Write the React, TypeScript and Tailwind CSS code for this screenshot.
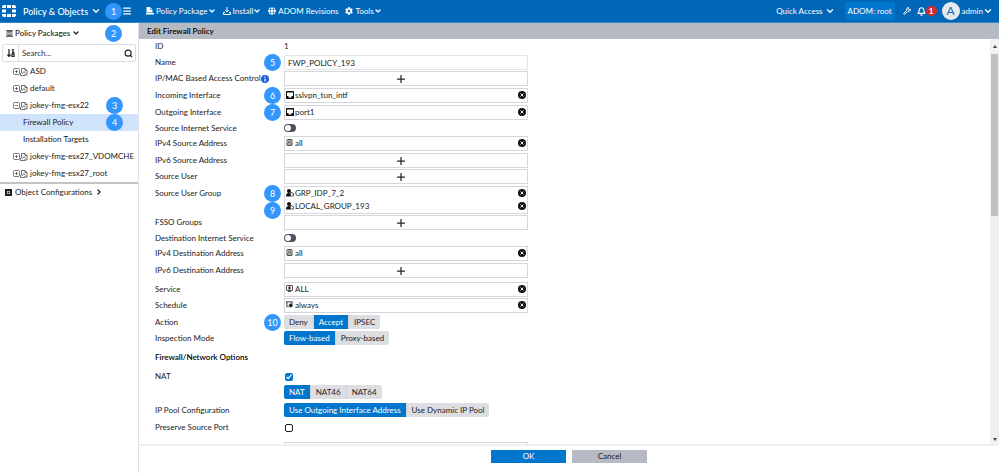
import React, { useState } from 'react';
import { Bell, ChevronDown, ChevronRight, Menu, Plus, Search, Wrench } from 'lucide-react';
import { FaCog, FaGlobe } from 'react-icons/fa';

const FortinetLogo = () => (
  <svg viewBox="0 0 28 24" className="w-3.5 h-3 shrink-0" fill="#fff">
    <path d="M0 6V4a4 4 0 0 1 4-4h4v6zM10 0h8v6h-8zM20 0h4a4 4 0 0 1 4 4v2h-8zM0 9h8v6H0zM20 9h8v6h-8zM0 18h8v6H4a4 4 0 0 1-4-4zM10 18h8v6h-8zM20 18h8v2a4 4 0 0 1-4 4h-4z" />
  </svg>
);

const PackageIcon = () => (
  <svg viewBox="0 0 16 16" className="w-2 h-2" fill="currentColor">
    <path d="M1 0h7v6h5v5H1zM9 0l4 5H9zM0 12h16v3H0z" />
  </svg>
);

const InstallIcon = () => (
  <svg viewBox="0 0 16 16" className="w-2 h-2" fill="none" stroke="currentColor" strokeWidth="2">
    <path d="M8 0v10M4 6l4 4 4-4M4 11H1v4h14v-4h-3" />
  </svg>
);

const ListIcon = () => (
  <svg viewBox="0 0 14 14" className="w-[7px] h-[7px]" fill="none" stroke="#333" strokeWidth="1.500">
    <path d="M0 1h14M0 13h14M2 3v8h10V3zM4 5.500h6M4 8.500h6" />
  </svg>
);

const SortIcon = () => (
  <svg viewBox="0 0 16 16" className="w-2 h-2" fill="none" stroke="#222" strokeWidth="2.500">
    <path d="M4 0v14M1 11l3 4 3-4M10 2l2-1v6M10 7h5M10 10h4v5h-4z" />
  </svg>
);

const ObjectIcon = () => (
  <svg viewBox="0 0 14 14" className="w-[7px] h-[7px]">
    <rect width="14" height="14" fill="#222" />
    <path d="M4 4h6v6H4z" fill="#fff" />
    <path d="M5 5h4v4H5z" fill="#222" />
  </svg>
);

const ExpandIcon = ({ open }: { open?: boolean }) => (
  <svg viewBox="0 0 14 14" className="w-[7px] h-[7px] shrink-0" fill="none" stroke="#444" strokeWidth="1.400">
    <rect x="1" y="1" width="12" height="12" rx="2" />
    <path d={open ? 'M4 7h6' : 'M4 7h6M7 4v6'} />
  </svg>
);

const PolicyFileIcon = () => (
  <svg viewBox="0 0 16 16" className="w-2 h-2 shrink-0" fill="none" stroke="#333" strokeWidth="1.400">
    <path d="M3 10V1h7l4 4v9h-3M10 1v4h4M1 10v5h9v-3M4 12l4-5 3 4" />
  </svg>
);

const InterfaceIcon = () => (
  <svg viewBox="0 0 16 16" className="w-2 h-2 shrink-0">
    <rect width="16" height="16" rx="1" fill="#111" />
    <path d="M2 3h12v7h-3v3H5v-3H2z" fill="#fff" />
  </svg>
);

const AddressIcon = () => (
  <svg viewBox="0 0 14 14" className="w-[7px] h-[7px] shrink-0" fill="none" stroke="#222" strokeWidth="1.600">
    <rect x="2" y="1" width="10" height="12" rx="1" />
    <path d="M4 4h6M4 6.500h6M2 10h10" />
  </svg>
);

const GroupIcon = () => (
  <svg viewBox="0 0 16 16" className="w-2 h-2 shrink-0">
    <circle cx="6" cy="4" r="4" fill="#111" />
    <path d="M0 15c0-5 2-7 5-7 2 0 3 .5 4 2v5z" fill="#111" />
    <path d="M9 7h3l1 2h2v5H9z" fill="#fff" stroke="#222" strokeWidth="1.500" />
  </svg>
);

const ServiceIcon = () => (
  <svg viewBox="0 0 14 14" className="w-[7px] h-[7px] shrink-0" fill="none" stroke="#222" strokeWidth="1.600">
    <rect x="1" y="1" width="12" height="10" rx="1" />
    <path d="M4 13h6" />
    <path d="M5 3h4v6H5z" fill="#222" stroke="none" />
  </svg>
);

const ScheduleIcon = () => (
  <svg viewBox="0 0 16 16" className="w-[7px] h-[7px] shrink-0" fill="none" stroke="#222" strokeWidth="2">
    <path d="M0 2h15M2 2v11h4M14 2v4" />
    <circle cx="11" cy="10" r="3.500" fill="#222" />
  </svg>
);

const RemoveIcon = () => (
  <svg viewBox="0 0 16 16" className="block w-2 h-2">
    <circle cx="8" cy="8" r="8" fill="#111" />
    <path d="M5 5l6 6M11 5l-6 6" stroke="#fff" strokeWidth="1.800" />
  </svg>
);

const InfoIcon = () => (
  <svg viewBox="0 0 16 16" className="w-2 h-2 shrink-0">
    <circle cx="8" cy="8" r="8" fill="#1f5fe0" />
    <path d="M8 3v2M8 7v6" stroke="#fff" strokeWidth="2.500" />
  </svg>
);

const Step = ({ n }: { n: number }) => (
  <span className="flex items-center justify-center w-[17px] h-[17px] shrink-0 rounded-full bg-[#3396fd] text-white text-[9px] leading-none">
    {n}
  </span>
);

interface RowProps {
  label: React.ReactNode;
  htmlFor?: string;
  height?: string;
  steps?: number[];
  children?: React.ReactNode;
}

const Row: React.FC<RowProps> = ({ label, htmlFor, height = 'h-[17px]', steps, children }) => (
  <div className={`relative flex items-start shrink-0 ${height}`}>
    <label htmlFor={htmlFor} className="flex items-center w-[129px] h-[15px] shrink-0 whitespace-nowrap">
      {label}
    </label>
    {steps && (
      <div className="absolute left-[109px] -top-px flex flex-col">
        {steps.map((n) => <Step key={n} n={n} />)}
      </div>
    )}
    {children}
  </div>
);

const AddBox = ({ name }: { name: string }) => (
  <button aria-label={`Add ${name}`} className="flex items-center justify-center w-[244px] h-[15px] pr-2.5 border border-[#d5d7db] bg-white">
    <Plus className="w-3 h-3" strokeWidth={2.5} />
  </button>
);

const ValueBox = ({ icon, values }: { icon: React.ReactNode; values: string[] }) => (
  <div className="w-[244px] border border-[#d5d7db] bg-white px-px">
    {values.map((value) => (
      <div key={value} className="flex items-center gap-px h-[13px]">
        <span className="w-2 pb-0.5">{icon}</span>
        <span>{value}</span>
        <button aria-label={`Remove ${value}`} className="ml-auto pb-px">
          <RemoveIcon />
        </button>
      </div>
    ))}
  </div>
);

const Segmented = ({ options, initial }: { options: string[]; initial: string }) => {
  const [selected, setSelected] = useState(initial);
  return (
    <div className="flex h-3.5 rounded-xs overflow-hidden divide-x divide-[#d0d2d6]">
      {options.map((option) => (
        <button
          key={option}
          aria-pressed={selected === option}
          onClick={() => setSelected(option)}
          className={`px-[5px] ${selected === option ? 'bg-[#0077cc] text-white' : 'bg-[#dddee2]'}`}
        >
          {option}
        </button>
      ))}
    </div>
  );
};

const Toggle = ({ id }: { id: string }) => (
  <div className="flex items-center h-[13px]">
    <input
      id={id}
      type="checkbox"
      role="switch"
      className="appearance-none flex items-center w-3 h-2 p-px rounded-full bg-[#4b5260] checked:justify-end checked:bg-[#0077cc] before:w-1.5 before:h-1.5 before:rounded-full before:bg-white"
    />
  </div>
);

const tree = [
  { name: 'ASD' },
  { name: 'default' },
  { name: 'jokey-fmg-esx22', open: true, step: 3 },
  { name: 'Firewall Policy', child: true, active: true, step: 4 },
  { name: 'Installation Targets', child: true },
  { name: 'jokey-fmg-esx27_VDOMCHE' },
  { name: 'jokey-fmg-esx27_root' }
];

const Header = () => (
  <header className="flex items-center h-[23px] shrink-0 bg-[#0067b8] border-b border-[#3186c8] text-white whitespace-nowrap">
    <div className="flex items-center w-[146px] pl-0.5 shrink-0">
      <FortinetLogo />
      <button className="flex items-center gap-[3px] ml-[7px] text-[9px] font-medium">
        Policy &amp; Objects
        <ChevronDown className="w-2.5 h-2.5" strokeWidth={3} />
      </button>
      <div className="ml-auto mr-3.5 flex items-center">
        <Step n={1} />
        <button aria-label="Menu"><Menu className="w-2.5 h-2.5" strokeWidth={3} /></button>
      </div>
    </div>
    <nav className="flex items-center gap-[7px]">
      <button className="flex items-center"><span className="mr-0.5"><PackageIcon /></span>Policy Package<ChevronDown className="w-2 h-2" strokeWidth={4} /></button>
      <button className="flex items-center"><span className="mr-0.5"><InstallIcon /></span>Install<ChevronDown className="w-2 h-2" strokeWidth={4} /></button>
      <button className="flex items-center"><FaGlobe className="w-2 h-2 mr-0.5" />ADOM Revisions</button>
      <button className="flex items-center"><FaCog className="w-2 h-2 mr-0.5" />Tools<ChevronDown className="w-2 h-2" strokeWidth={4} /></button>
    </nav>
    <div className="flex items-center ml-auto pr-1.5">
      <button className="flex items-center gap-0.5 mr-2.5">Quick Access<ChevronDown className="w-2.5 h-2.5" strokeWidth={3} /></button>
      <button className="h-[18px] px-[3px] mr-2 rounded-xs bg-[#0077cc]">ADOM: root</button>
      <button aria-label="Settings" className="mr-1.5"><Wrench className="w-2 h-2" strokeWidth={3} /></button>
      <button aria-label="Notifications" className="flex items-center mr-[5px]">
        <Bell className="w-[9px] h-[9px]" strokeWidth={3} />
        <span className="flex items-center justify-center w-[11px] h-2.5 rounded-full bg-[#d02c2c] text-[8px] font-bold">1</span>
      </button>
      <button className="flex items-center">
        <span className="flex items-center justify-center w-[18px] h-[18px] mr-0.5 rounded-full bg-[#e6e9ee] text-[#1468b3] text-xs">A</span>
        admin
        <ChevronDown className="w-2.5 h-2.5" strokeWidth={3} />
      </button>
    </div>
  </header>
);

const Sidebar = () => (
  <aside className="w-[139px] shrink-0 border-r border-[#e0e1e4]">
    <div className="flex items-center h-5 pl-1.5 pr-4">
      <button className="flex items-center gap-0.5 font-medium">
        <ListIcon />
        Policy Packages
        <ChevronDown className="w-2 h-2" strokeWidth={4} />
      </button>
      <div className="ml-auto"><Step n={2} /></div>
    </div>
    <div className="flex items-center h-[18px] mx-0.5 mt-px border border-[#dcdde0] rounded-xs">
      <button aria-label="Sort" className="flex items-center justify-center w-4 h-full border-r border-[#dcdde0]"><SortIcon /></button>
      <input aria-label="Search" placeholder="Search..." className="flex-1 min-w-0 pl-[3px] outline-none placeholder:text-[#333]" />
      <button aria-label="Find" className="mr-0.5"><Search className="w-[9px] h-[9px]" strokeWidth={3} /></button>
    </div>
    <ul className="pt-px border-b-2 border-[#c4c4c4]">
      {tree.map((item) => (
        <li key={item.name} className={`flex items-center h-[17px] pr-[15px] whitespace-nowrap ${item.child ? 'pl-[23px]' : 'pl-[13px]'} ${item.active ? 'bg-[#cfe4fa]' : ''}`}>
          {!item.child && <ExpandIcon open={item.open} />}
          {!item.child && <PolicyFileIcon />}
          <a href="#" className={item.child ? '' : 'ml-0.5'}>{item.name}</a>
          {item.step && <div className="ml-auto"><Step n={item.step} /></div>}
        </li>
      ))}
    </ul>
    <button className="flex items-center gap-[3px] h-4 pl-[5px]">
      <ObjectIcon />
      Object Configurations
      <ChevronRight className="w-2 h-2" strokeWidth={4} />
    </button>
  </aside>
);

const PolicyForm = () => (
  <div className="flex flex-1 min-h-0">
    <div className="flex flex-col flex-1 min-w-0 overflow-hidden pl-4">
      <Row label="ID" height="h-4"><span className="leading-[15px]">1</span></Row>
      <Row label="Name" htmlFor="name" height="h-4" steps={[5]}>
        <input id="name" defaultValue="FWP_POLICY_193" className="w-[244px] h-[15px] pl-[3px] border border-[#e3e4e7] rounded-xs outline-none" />
      </Row>
      <Row label={<>IP/MAC Based Access Control<InfoIcon /></>}><AddBox name="access control" /></Row>
      <Row label="Incoming Interface" steps={[6]}><ValueBox icon={<InterfaceIcon />} values={['sslvpn_tun_intf']} /></Row>
      <Row label="Outgoing Interface" height="h-4" steps={[7]}><ValueBox icon={<InterfaceIcon />} values={['port1']} /></Row>
      <Row label="Source Internet Service" htmlFor="src-internet" height="h-[15px]"><Toggle id="src-internet" /></Row>
      <Row label="IPv4 Source Address"><ValueBox icon={<AddressIcon />} values={['all']} /></Row>
      <Row label="IPv6 Source Address" height="h-4"><AddBox name="IPv6 source address" /></Row>
      <Row label="Source User"><AddBox name="source user" /></Row>
      <Row label="Source User Group" height="h-[29px]" steps={[8, 9]}><ValueBox icon={<GroupIcon />} values={['GRP_IDP_7_2', 'LOCAL_GROUP_193']} /></Row>
      <Row label="FSSO Groups" height="h-4"><AddBox name="FSSO group" /></Row>
      <Row label="Destination Internet Service" htmlFor="dst-internet" height="h-[15px]"><Toggle id="dst-internet" /></Row>
      <Row label="IPv4 Destination Address"><ValueBox icon={<AddressIcon />} values={['all']} /></Row>
      <Row label="IPv6 Destination Address" height="h-[19px]"><AddBox name="IPv6 destination address" /></Row>
      <Row label="Service" height="h-4"><ValueBox icon={<ServiceIcon />} values={['ALL']} /></Row>
      <Row label="Schedule"><ValueBox icon={<ScheduleIcon />} values={['always']} /></Row>
      <Row label="Action" height="h-4" steps={[10]}><Segmented options={['Deny', 'Accept', 'IPSEC']} initial="Accept" /></Row>
      <Row label="Inspection Mode" height="h-4"><Segmented options={['Flow-based', 'Proxy-based']} initial="Flow-based" /></Row>

      <h2 className="shrink-0 h-[22px] leading-[21px] font-semibold text-black">Firewall/Network Options</h2>

      <Row label="NAT" htmlFor="nat" height="h-4">
        <div className="flex items-center h-4">
          <input id="nat" type="checkbox" defaultChecked className="w-2 h-2 ml-px accent-[#0077cc]" />
        </div>
      </Row>
      <Row label="" height="h-[18px]"><Segmented options={['NAT', 'NAT46', 'NAT64']} initial="NAT" /></Row>
      <Row label="IP Pool Configuration"><Segmented options={['Use Outgoing Interface Address', 'Use Dynamic IP Pool']} initial="Use Outgoing Interface Address" /></Row>
      <Row label="Preserve Source Port" htmlFor="preserve" height="h-[22px]">
        <div className="flex items-center h-4">
          <input id="preserve" type="checkbox" className="appearance-none w-2 h-2 ml-px border border-[#222] rounded-xs checked:bg-[#0077cc]" />
        </div>
      </Row>
      <Row label=""><div className="w-[244px] h-[15px] border border-[#d5d7db]" /></Row>
    </div>

    {/* Scrollbar */}
    <div className="flex flex-col items-center w-[9px] shrink-0 bg-[#f1f1f1]">
      <div className="flex items-center h-[15px]"><svg viewBox="0 0 4 3" className="w-1 h-[3px]"><path d="M0 3l2-3 2 3z" fill="#444" /></svg></div>
      <div className="w-[7px] h-2/5 bg-[#c1c1c1]" />
      <div className="flex items-center h-2.5 mt-auto"><svg viewBox="0 0 4 3" className="w-1 h-[3px]"><path d="M0 0l2 3 2-3z" fill="#444" /></svg></div>
    </div>
  </div>
);

export default function App() {
  return (
    <div className="flex flex-col h-screen overflow-hidden bg-white text-[#222] text-[8px] leading-[13px] font-['Lato','Liberation_Sans',sans-serif]">
      <Header />
      <div className="flex flex-1 min-h-0">
        <Sidebar />
        <main className="flex flex-col flex-1 min-w-0">
          <h1 className="h-4 shrink-0 pl-2 leading-4 font-semibold text-black bg-[#b6bac3]">Edit Firewall Policy</h1>
          <PolicyForm />
          <footer className="flex items-start justify-center gap-1.5 h-[29px] shrink-0 pt-1 border-t-2 border-[#efeff0]">
            <button className="w-[75px] h-[13px] bg-[#0077cc] text-white">OK</button>
            <button className="w-[75px] h-[13px] bg-[#b6bac3]">Cancel</button>
          </footer>
        </main>
      </div>
    </div>
  );
}
